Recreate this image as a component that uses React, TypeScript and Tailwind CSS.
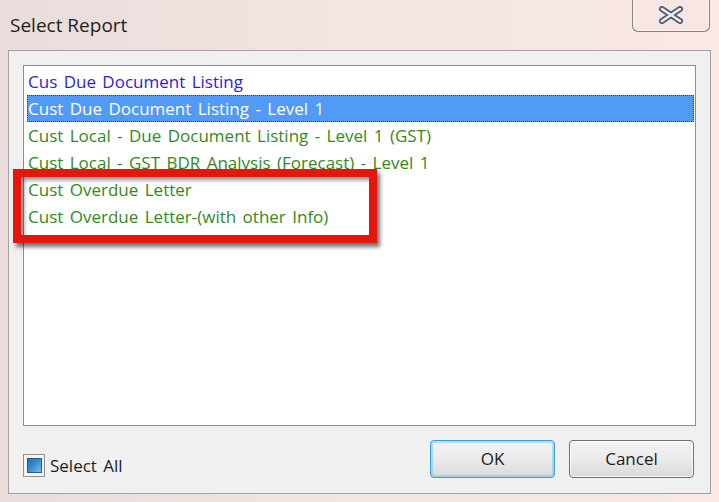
const reports = [
  { label: 'Cus Due Document Listing', tone: 'blue' },
  { label: 'Cust Due Document Listing - Level 1', tone: 'selected' },
  { label: 'Cust Local - Due Document Listing - Level 1 (GST)', tone: 'green' },
  { label: 'Cust Local - GST BDR Analysis (Forecast) - Level 1', tone: 'green' },
  { label: 'Cust Overdue Letter', tone: 'green' },
  { label: 'Cust Overdue Letter-(with other Info)', tone: 'green' },
];

const toneClass = (tone: string) => {
  switch (tone) {
    case 'blue':
      return 'text-[#2f22d6]';
    case 'selected':
      return 'bg-[#519bf7] text-white outline-1 outline-dotted outline-[#5a3a1a] -outline-offset-1';
    default:
      return 'text-[#32891c]';
  }
};

function CloseButton() {
  return (
    <div className="w-[78px] h-[34px] -mt-[2px] rounded-b-[6px] border border-t-0 border-[#8a7f80] bg-[#f7e6e3] flex items-center justify-center shadow-[inset_0_0_0_1px_rgba(255,255,255,0.6)]">
      <svg width="26" height="18" viewBox="0 0 26 18">
        <path
          d="M4 3 L22 15 M22 3 L4 15"
          stroke="#55596a"
          strokeWidth="6"
          strokeLinecap="round"
        />
        <path
          d="M4 3 L22 15 M22 3 L4 15"
          stroke="#eef0f3"
          strokeWidth="2.6"
          strokeLinecap="round"
        />
      </svg>
    </div>
  );
}

function Checkbox() {
  return (
    <div className="w-[22px] h-[23px] border border-[#8e8f8f] bg-[#f4f4f4] flex items-center justify-center">
      <div className="w-[15px] h-[15px] border border-[#1f5d8f] bg-gradient-to-br from-[#2a6fae] via-[#3d8fcf] to-[#7cc0ea]" />
    </div>
  );
}

function DialogButton({ label, primary }: { label: string; primary?: boolean }) {
  return (
    <button
      className={`w-[125px] h-[38px] rounded-[4px] border bg-gradient-to-b from-[#f3f3f3] via-[#ebebeb] to-[#d9d9d9] text-[17px] text-[#1b1b1b] ${
        primary
          ? 'border-[#3c9ed8] shadow-[inset_0_0_0_2px_rgba(120,200,240,0.55)]'
          : 'border-[#707070] shadow-[inset_0_0_0_1px_rgba(255,255,255,0.8)]'
      }`}
    >
      {label}
    </button>
  );
}

export default function App() {
  return (
    <div
      className="relative w-[719px] h-[502px] overflow-hidden bg-gradient-to-r from-[#e9dcda] via-[#f4e5e2] to-[#f9e8e5] flex flex-col"
      style={{ fontFamily: '"Open Sans", "Noto Sans", sans-serif' }}
    >
      <div className="h-[50px] shrink-0 flex items-start justify-between pl-[10px] pr-[9px]">
        <div className="pt-[11px] text-[19px] text-[#1e1e1e]">Select Report</div>
        <CloseButton />
      </div>

      <div className="mx-[8px] h-[444px] border border-[#a3a3a3] bg-[#f0f0f0] flex flex-col px-[14px] pt-[14px]">
        <div className="h-[361px] border border-[#8a8e96] bg-white pt-[2px] pl-[3px] pr-[1px]">
          {reports.map((r) => (
            <div
              key={r.label}
              className={`h-[27px] flex items-center pl-[1px] text-[17px] [word-spacing:2px] leading-none whitespace-nowrap ${toneClass(r.tone)}`}
            >
              {r.label}
            </div>
          ))}
        </div>

        <div className="flex items-center justify-between mt-[13px] pr-[2px]">
          <div className="flex items-center gap-[5px] mt-[14px]">
            <Checkbox />
            <span className="text-[17px] [word-spacing:2px] text-[#1e1e1e]">Select All</span>
          </div>
          <div className="flex gap-[14px]">
            <DialogButton label="OK" primary />
            <DialogButton label="Cancel" />
          </div>
        </div>
      </div>

      <div className="absolute left-[13px] top-[169px] w-[364px] h-[74px] border-[8px] border-[#e5170c] shadow-[3px_4px_4px_rgba(0,0,0,0.55),inset_3px_3px_4px_rgba(0,0,0,0.45)]" />
    </div>
  );
}
